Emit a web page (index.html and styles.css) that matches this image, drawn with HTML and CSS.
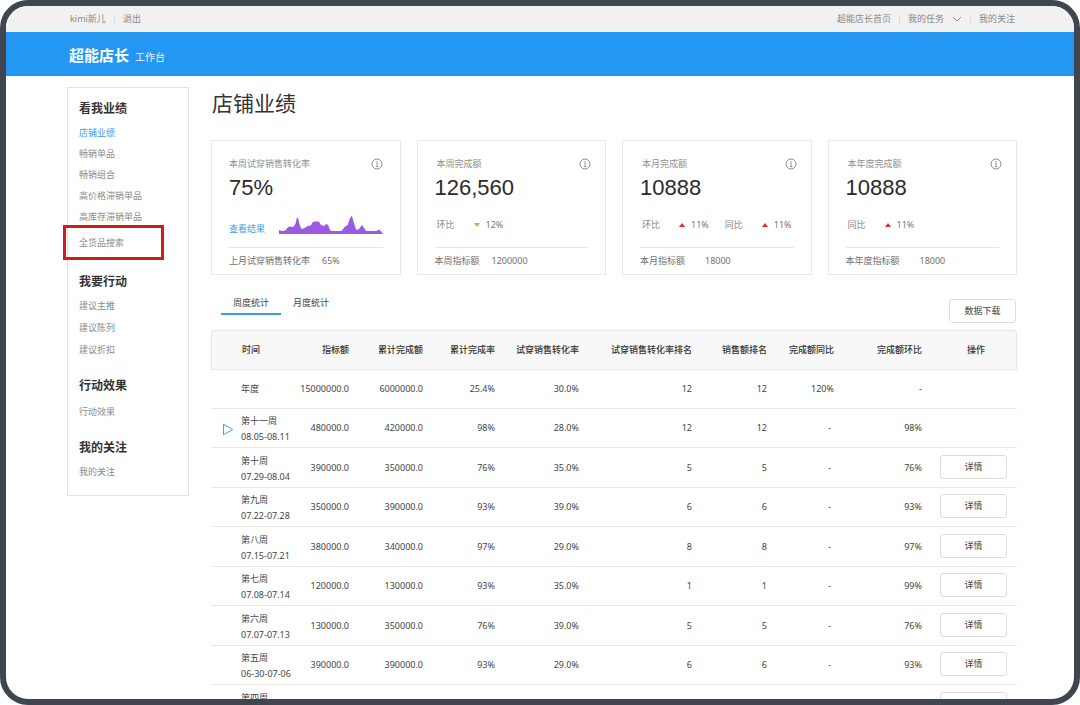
FILE: index.html
```html
<!DOCTYPE html>
<html lang="zh-CN">
<head>
<meta charset="utf-8">
<title>超能店长 工作台</title>
<link rel="stylesheet" href="styles.css">
</head>
<body>
<svg class="defs" aria-hidden="true">
  <symbol id="info" viewBox="0 0 12 12"><circle cx="6" cy="6" r="5" fill="none" stroke="#8c8c8c"/><path d="M5 5.2h1.2V8.6M4.8 8.7h2.6M6 3v1.1" fill="none" stroke="#8c8c8c" stroke-width=".9"/></symbol>
</svg>
<div class="screen">
  <nav class="topbar">
    <div class="links"><a href="#">kimi新儿</a><i class="sep"></i><a href="#">退出</a></div>
    <div class="links">
      <a href="#">超能店长首页</a><i class="sep"></i>
      <a href="#" class="menu">我的任务<svg width="10" height="6" viewBox="0 0 10 6"><path d="M1 1l4 4 4-4" fill="none" stroke="#8a8a8a"/></svg></a><i class="sep"></i>
      <a href="#">我的关注</a>
    </div>
  </nav>
  <header class="brand"><strong>超能店长</strong><span>工作台</span></header>
  <div class="layout">
    <aside class="sidebar">
      <section><h2>看我业绩</h2>
        <ul class="tight">
          <li><a href="#" class="active">店铺业绩</a></li><li><a href="#">畅销单品</a></li><li><a href="#">畅销组合</a></li><li><a href="#">高价格滞销单品</a></li><li><a href="#">高库存滞销单品</a></li><li class="marked"><a href="#">全货品搜索</a></li>
        </ul></section>
      <section><h2>我要行动</h2>
        <ul><li><a href="#">建议主推</a></li><li><a href="#">建议陈列</a></li><li><a href="#">建议折扣</a></li></ul></section>
      <section><h2>行动效果</h2><ul class="single"><li><a href="#">行动效果</a></li></ul></section>
      <section><h2>我的关注</h2><ul><li><a href="#">我的关注</a></li></ul></section>
    </aside>
    <main class="main">
      <h1>店铺业绩</h1>
      <div class="cards">
        <article class="card">
          <div class="card-head"><span>本周试穿销售转化率</span><svg class="info"><use href="#info"/></svg></div>
          <div class="figure">75%</div>
          <div class="trend"><a href="#">查看结果</a>
            <svg class="spark" viewBox="0 0 101 18" preserveAspectRatio="none"><path d="M0 18V14L3 15 6 14.500 9 11 11 10.500 14 11 16 8 17.500 1.500 18.500 2 20.500 10 22 13 25 12 28 10 31 9.500 33 6 35 5.500 39 5.500 41 9 44 10 46 8 48 9 50 14.500 53 15 61 15 64 11 67 9 69 3 70.500 0 71.500 1 73.500 8 75.500 14 78 13 81 9 83 12 85 15 95 15 98 13.500 101 17V18Z" fill="#9a5be0"/></svg></div>
          <div class="card-foot"><span>上月试穿销售转化率</span><span>65%</span></div>
        </article>
        <article class="card">
          <div class="card-head"><span>本周完成额</span><svg class="info"><use href="#info"/></svg></div>
          <div class="figure">126,560</div>
          <div class="trend"><span class="rate"><span>环比</span><i class="down"></i><b>12%</b></span></div>
          <div class="card-foot"><span>本周指标额</span><span>1200000</span></div>
        </article>
        <article class="card">
          <div class="card-head"><span>本月完成额</span><svg class="info"><use href="#info"/></svg></div>
          <div class="figure">10888</div>
          <div class="trend"><span class="rate"><span>环比</span><i class="up"></i><b>11%</b></span><span class="rate"><span>同比</span><i class="up"></i><b>11%</b></span></div>
          <div class="card-foot wide"><span>本月指标额</span><span>18000</span></div>
        </article>
        <article class="card">
          <div class="card-head"><span>本年度完成额</span><svg class="info"><use href="#info"/></svg></div>
          <div class="figure">10888</div>
          <div class="trend"><span class="rate"><span>同比</span><i class="up"></i><b>11%</b></span></div>
          <div class="card-foot wide"><span>本年度指标额</span><span>18000</span></div>
        </article>
      </div>
      <div class="toolbar">
        <div class="tabs"><button class="tab on" type="button">周度统计</button><button class="tab" type="button">月度统计</button></div>
        <button class="btn" type="button">数据下载</button>
      </div>
      <table class="stats">
        <colgroup><col class="c-time"><col class="c-target"><col class="c-done"><col class="c-ratio"><col class="c-conv"><col class="c-convrank"><col class="c-salesrank"><col class="c-yoy"><col class="c-mom"><col class="c-op"></colgroup>
        <thead><tr><th>时间</th><th>指标额</th><th>累计完成额</th><th>累计完成率</th><th>试穿销售转化率</th><th>试穿销售转化率排名</th><th>销售额排名</th><th>完成额同比</th><th>完成额环比</th><th>操作</th></tr></thead>
        <tbody>
          <tr><td>年度</td><td>15000000.0</td><td>6000000.0</td><td>25.4%</td><td>30.0%</td><td>12</td><td>12</td><td>120%</td><td>-</td><td></td></tr>
          <tr><td class="week current"><svg class="play" width="12" height="13" viewBox="0 0 12 13"><path d="M1.500 1.200V11.800L10.800 6.500Z" fill="none" stroke="#4a9fe8" stroke-linejoin="round"/></svg>第十一周<br>08.05-08.11</td><td>480000.0</td><td>420000.0</td><td>98%</td><td>28.0%</td><td>12</td><td>12</td><td class="none">-</td><td>98%</td><td></td></tr>
          <tr><td class="week">第十周<br>07.29-08.04</td><td>390000.0</td><td>350000.0</td><td>76%</td><td>35.0%</td><td>5</td><td>5</td><td class="none">-</td><td>76%</td><td><button class="btn" type="button">详情</button></td></tr>
          <tr><td class="week">第九周<br>07.22-07.28</td><td>350000.0</td><td>390000.0</td><td>93%</td><td>39.0%</td><td>6</td><td>6</td><td class="none">-</td><td>93%</td><td><button class="btn" type="button">详情</button></td></tr>
          <tr><td class="week">第八周<br>07.15-07.21</td><td>380000.0</td><td>340000.0</td><td>97%</td><td>29.0%</td><td>8</td><td>8</td><td class="none">-</td><td>97%</td><td><button class="btn" type="button">详情</button></td></tr>
          <tr><td class="week">第七周<br>07.08-07.14</td><td>120000.0</td><td>130000.0</td><td>93%</td><td>35.0%</td><td>1</td><td>1</td><td class="none">-</td><td>99%</td><td><button class="btn" type="button">详情</button></td></tr>
          <tr><td class="week">第六周<br>07.07-07.13</td><td>130000.0</td><td>350000.0</td><td>76%</td><td>39.0%</td><td>5</td><td>5</td><td class="none">-</td><td>76%</td><td><button class="btn" type="button">详情</button></td></tr>
          <tr><td class="week">第五周<br>06-30-07-06</td><td>390000.0</td><td>390000.0</td><td>93%</td><td>29.0%</td><td>6</td><td>6</td><td class="none">-</td><td>93%</td><td><button class="btn" type="button">详情</button></td></tr>
          <tr><td class="week">第四周<br>&nbsp;</td><td></td><td></td><td></td><td></td><td></td><td></td><td></td><td></td><td><button class="btn" type="button"></button></td></tr>
        </tbody>
      </table>
    </main>
  </div>
</div>
</body>
</html>
```
FILE: styles.css
```css
* { box-sizing: border-box; }
body {
  margin: 0;
  background: #fff;
  color: #444;
  font: 9px/16px "Noto Sans", "Noto Sans CJK SC", sans-serif;
}
h1, h2, ul { margin: 0; padding: 0; }
ul { list-style: none; }
a { color: inherit; text-decoration: none; }
button { font: inherit; color: inherit; cursor: pointer; }
.defs { position: absolute; width: 0; height: 0; }

.screen {
  height: 100vh;
  overflow: hidden;
  border: 6px solid #3f4650;
  border-radius: 28px;
}
.topbar {
  display: flex;
  justify-content: space-between;
  align-items: center;
  height: 26px;
  padding: 0 59px 0 64px;
  background: #f1f1f1;
  color: #8a8a8a;
}
.links { display: flex; align-items: center; gap: 8px; }
.sep { width: 1px; height: 9px; background: #ddd; }
.menu { display: flex; align-items: center; gap: 8px; }

.brand {
  display: flex;
  align-items: baseline;
  gap: 6px;
  height: 44px;
  padding: 0 63px;
  background: #2397f1;
  color: #fff;
  line-height: 46px;
}
.brand strong { font-size: 15px; font-weight: 700; }
.brand span { font-size: 10px; opacity: .9; }

.layout {
  display: flex;
  align-items: flex-start;
  gap: 22px;
  padding: 11px 57px 0 61px;
}
.sidebar {
  flex: 0 0 122px;
  padding: 12px 11px;
  border: 1px solid #e3e3e3;
  color: #8a8a8a;
}
.sidebar h2 {
  margin-bottom: 4px;
  color: #333;
  font-size: 12px;
  line-height: 18px;
  font-weight: 700;
}
.sidebar section + section { margin-top: 13px; }
.sidebar section + section + section { margin-top: 16px; }
.sidebar li { line-height: 22px; }
.sidebar .single { padding-top: 2px; }
.sidebar .tight li { line-height: 21px; }
.sidebar .active { color: #3a9cec; }
.sidebar .tight .marked {
  width: 101px;
  margin: -2px 0 0 -16px;
  padding-left: 13px;
  border: 3px solid #d01c1c;
  line-height: 29px;
}

.main { flex: 1; min-width: 0; }
h1 {
  padding-left: 1px;
  color: #333;
  font-size: 21px;
  line-height: 32px;
  font-weight: 400;
}
.cards {
  display: grid;
  grid-template-columns: repeat(4, 1fr);
  gap: 16px;
  margin-top: 21px;
}
.card {
  padding: 15px 17px 5px;
  border: 1px solid #e8e8e8;
}
.card-head {
  display: flex;
  justify-content: space-between;
  align-items: center;
  color: #909090;
}
.card + .card .card-head { padding-left: 2px; margin-right: -3px; }
.info { width: 12px; height: 12px; }
.figure {
  color: #2b2b2b;
  font: 22px/32px "Liberation Sans", Arial, sans-serif;
}
.trend {
  display: flex;
  align-items: center;
  gap: 14px;
  height: 43px;
  padding-bottom: 1px;
  color: #888;
}
.trend a { color: #3a9cec; padding-top: 8px; }
.spark { flex: 1; height: 18px; }
.rate { display: flex; align-items: center; padding-left: 2px; }
.rate b { margin-left: 6px; color: #777; font-weight: 400; }
.up, .down {
  margin-left: 19px;
  border: 3px solid transparent;
}
.up { border-top: 0; border-bottom: 4px solid #e02b2b; }
.down { border-bottom: 0; border-top: 4px solid #7bd35a; }
.card-foot {
  display: flex;
  gap: 12px;
  padding-top: 5px;
  border-top: 1px solid #e6e6e6;
  color: #6f6f6f;
}
.card-foot.wide { gap: 20px; }

.toolbar {
  display: flex;
  justify-content: space-between;
  align-items: center;
  margin-top: 18px;
  padding: 0 1px 2px 10px;
  height: 37px;
}
.tabs { display: flex; align-self: flex-start; }
.tab {
  width: 60px;
  height: 22px;
  padding: 0;
  background: none;
  border: 0;
  border-bottom: 2px solid transparent;
}
.tab.on { border-color: #3aa3c9; }
.btn {
  width: 67px;
  height: 24px;
  padding: 0;
  background: #fff;
  border: 1px solid #dcdcdc;
  border-radius: 3px;
  vertical-align: middle;
}

.stats {
  width: 100%;
  table-layout: fixed;
  border-collapse: separate;
  border-spacing: 0;
}
.c-time { width: 86px; }
.c-target { width: 52px; }
.c-done { width: 74px; }
.c-ratio { width: 72px; }
.c-conv { width: 84px; }
.c-convrank { width: 113px; }
.c-salesrank { width: 75px; }
.c-yoy { width: 67px; }
.c-mom { width: 88px; }
.c-op { width: 95px; }
.stats th, .stats td {
  height: 39px;
  padding: 0;
  border-bottom: 1px solid #e8e8e8;
  text-align: right;
  white-space: nowrap;
}
.stats tr:nth-child(odd) td { height: 40px; }
.stats tbody tr:first-child td { height: 39px; }
.stats th {
  height: 40px;
  background: #f8f8f8;
  border-top: 1px solid #e8e8e8;
  color: #333;
  font-weight: 500;
}
.stats th:first-child { border-left: 1px solid #e8e8e8; border-top-left-radius: 3px; }
.stats th:last-child { border-right: 1px solid #e8e8e8; border-top-right-radius: 3px; }
.stats th:first-child, .stats td:first-child { padding-left: 30px; text-align: left; }
.stats th:last-child { padding-left: 14px; text-align: center; }
.stats td:last-child { padding: 0 2px 2px 10px; text-align: center; }
.stats .none { padding-right: 3px; }
.stats .week { padding-top: 2px; }
.stats td.current:first-child { padding-left: 11px; }
.play { float: left; margin: 10px 7px 9px 0; }
```
